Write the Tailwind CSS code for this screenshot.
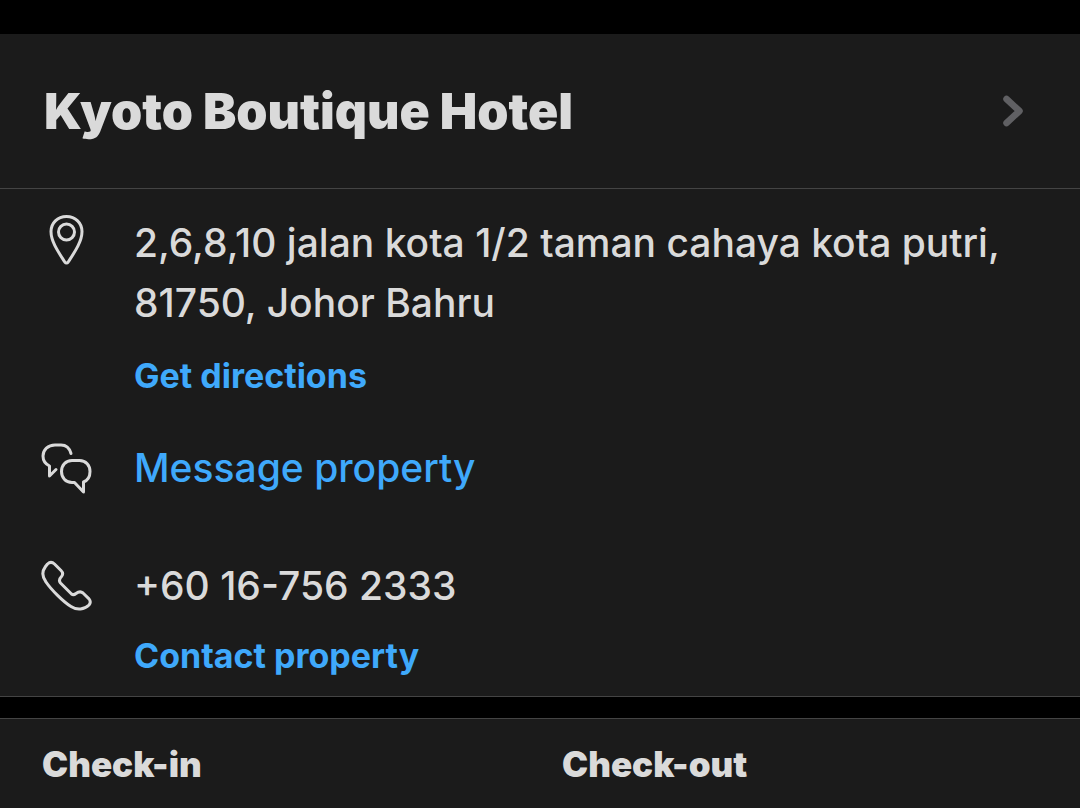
<!doctype html>
<html lang="en">
  <head>
    <meta charset="UTF-8" />
    <meta name="viewport" content="width=device-width, initial-scale=1.0" />
    <title>Kyoto Boutique Hotel</title>
    <script src="https://cdn.jsdelivr.net/npm/@tailwindcss/browser@4"></script>
  </head>
  <body
    class="bg-black text-[#dadada] font-['Inter','Liberation_Sans',sans-serif] pt-[34px] min-h-screen flex flex-col"
  >
    <main class="flex-1 flex flex-col">
      <!-- Property details -->
      <section class="bg-[#1b1b1b] border-b border-[#444444]">
        <a
          href="#property"
          class="flex items-center justify-between pl-11 pr-14 h-[155px] border-b border-[#444444]"
        >
          <h1 class="text-[50px] leading-[60px] font-black">
            Kyoto Boutique Hotel
          </h1>
          <svg
            class="w-[22px] h-8 text-[#606063]"
            viewBox="0 0 22 32"
            fill="none"
            stroke="currentColor"
            stroke-width="6.5"
            stroke-linecap="round"
            stroke-linejoin="round"
            aria-hidden="true"
          >
            <path d="M4.500 4 17.500 16 4.500 28" />
          </svg>
        </a>

        <div class="px-10 pt-6 pb-[17px]">
          <!-- Address -->
          <div class="flex gap-10">
            <svg
              class="w-[54px] h-[54px] shrink-0"
              viewBox="0 0 54 54"
              fill="none"
              stroke="currentColor"
              stroke-width="3"
              stroke-linecap="round"
              stroke-linejoin="round"
              aria-hidden="true"
            >
              <path
                d="M26.5 3.5C17.5 3.5 11 10 11 18.5 11 29 19 40 24.8 49Q26.5 51.2 28.2 49C34 40 42 29 42 18.5 42 10 35.5 3.5 26.5 3.5Z"
              />
              <circle cx="26.5" cy="19" r="8" />
            </svg>
            <div>
              <p class="text-[39px] leading-[60px] font-medium">
                2,6,8,10 jalan kota 1/2 taman cahaya kota putri, 81750, Johor
                Bahru
              </p>
              <a
                href="#directions"
                class="block mt-5 text-[34px] leading-[46px] font-bold text-[#3fa9fb]"
                >Get directions</a
              >
            </div>
          </div>

          <!-- Message -->
          <div class="flex gap-10 mt-[39px]">
            <svg
              class="w-[54px] h-[54px] mt-[3px] shrink-0"
              viewBox="0 0 54 54"
              fill="none"
              stroke="currentColor"
              stroke-width="3"
              stroke-linecap="round"
              stroke-linejoin="round"
              aria-hidden="true"
            >
              <path
                d="M31 12.5C29.5 7 26 4 21 4H15C8 4 3 8.800 3 15 3 19.500 5.500 23 9.500 25V35L16 28.500"
              />
              <path
                d="M32 19.500H39.500C46 19.500 50 24.500 50 30.500 50 35.500 47.500 39.500 43.500 41V51L34.500 41.500H32C25.500 41.500 21.500 36.500 21.500 30.500 21.500 24.500 25.500 19.500 32 19.500Z"
              />
            </svg>
            <a
              href="#message"
              class="text-[39px] leading-[60px] font-medium text-[#3fa9fb]"
              >Message property</a
            >
          </div>

          <!-- Phone -->
          <div class="flex gap-10 mt-[58px]">
            <svg
              class="w-[54px] h-[54px] mt-[3px] shrink-0"
              viewBox="0 0 54 54"
              fill="none"
              stroke="currentColor"
              stroke-width="3"
              stroke-linecap="round"
              stroke-linejoin="round"
              aria-hidden="true"
            >
              <path
                d="M5.500 7.500 7.500 5Q11 1.800 14.500 5L21 11.500Q24 14.500 21.500 17.500 18 21 20.500 24L31.500 35Q33.500 36.500 36 34.500 40 31.500 43 34L49 39.800Q51.500 43 49 46C44.500 50.500 37 51.500 31 47.500 23.500 43 11 30.500 6 23 2.200 18 1.800 12.500 5.500 7.500Z"
              />
            </svg>
            <div>
              <p class="text-[39px] leading-[60px] font-medium">
                +60 16-756 2333
              </p>
              <a
                href="#contact"
                class="block mt-[17px] text-[34px] leading-[46px] font-bold text-[#3fa9fb]"
                >Contact property</a
              >
            </div>
          </div>
        </div>
      </section>

      <!-- Stay dates -->
      <section
        class="flex-1 grid grid-cols-2 mt-[21px] px-[42px] pt-[22px] pb-4 bg-[#1b1b1b] border-t border-[#444444]"
      >
        <h2 class="text-[35px] leading-[46px] font-black">Check-in</h2>
        <h2 class="text-[35px] leading-[46px] font-black pl-[22px]">
          Check-out
        </h2>
      </section>
    </main>
  </body>
</html>
